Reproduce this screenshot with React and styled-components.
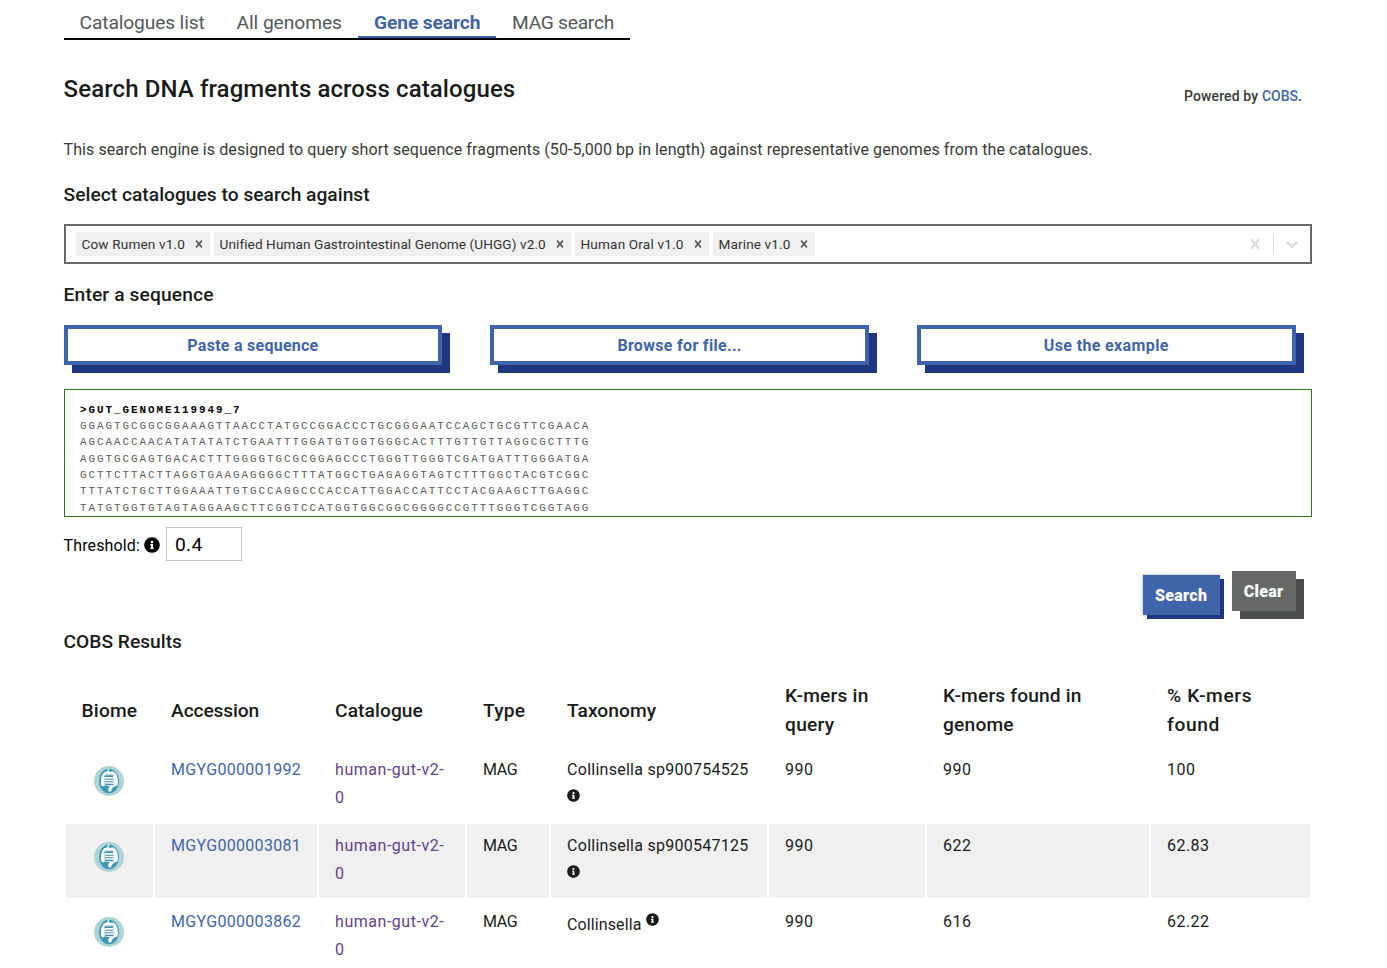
import React from 'react';
import styled, { createGlobalStyle } from 'styled-components';
import { FaInfoCircle } from 'react-icons/fa';

const blue = '#3f64aa';
const navy = '#1f3680';

const GlobalStyle = createGlobalStyle`
  * { box-sizing: border-box; }
  body {
    margin: 0;
    background: #fff;
    color: #1a1c1a;
    font: 400 16px/28px Roboto, "Liberation Sans", sans-serif;
  }
`;

const Page = styled.main`
  height: 968px;
  overflow: hidden;
  padding: 0 75.4px 0 63.6px;
`;

const Fit = styled.span`
  letter-spacing: ${(p) => p.$ls}px;
`;

const Tabs = styled.nav`
  display: flex;
  width: 566px;
  height: 40px;
  border-bottom: 2px solid #000;
`;

const Tab = styled.a`
  width: ${(p) => p.$w}px;
  height: 38px;
  padding: 9px 0 0 16.4px;
  font-size: 19.2px;
  line-height: 27px;
  white-space: nowrap;
  font-weight: ${(p) => (p.$active ? 700 : 400)};
  color: ${(p) => (p.$active ? blue : '#54585a')};
  border-bottom: 2px solid ${(p) => (p.$active ? blue : 'transparent')};

  &:first-child { padding-left: 16px; }
`;

const Header = styled.header`
  display: flex;
  align-items: flex-end;
  justify-content: space-between;
  height: 29px;
  margin-top: 35px;
  padding-right: 9.6px;
`;

const Title = styled.h1`
  margin: 0 0 1px;
  font-size: 24px;
  font-weight: 500;
  line-height: 28px;
  letter-spacing: 0.1px;
`;

const Powered = styled.p`
  margin: 0;
  font-size: 14px;
  font-weight: 500;
  line-height: 16px;
  letter-spacing: 0.13px;
  color: #373a36;
`;

const Link = styled.a`
  color: ${(p) => (p.$visited ? '#62408c' : blue)};
  letter-spacing: ${(p) => p.$ls || 0}px;
`;

const Intro = styled.p`
  margin: 33px 0 0;
  line-height: 25px;
  letter-spacing: 0.076px;
  white-space: nowrap;
  color: #373a36;
`;

const Heading = styled.h2`
  margin: ${(p) => p.$mt}px 0 0;
  font-size: 19.2px;
  font-weight: 500;
  line-height: 29px;
  letter-spacing: ${(p) => p.$ls || 0}px;
`;

const Select = styled.div`
  display: flex;
  align-items: center;
  height: 40px;
  margin-top: 15px;
  padding-left: 10px;
  border: 2px solid #696969;
`;

const Chips = styled.div`
  display: flex;
  flex: 1;
  gap: 4px;
`;

const Chip = styled.div`
  display: flex;
  align-items: center;
  justify-content: space-between;
  width: ${(p) => p.$w}px;
  height: 24px;
  padding: 0 3.6px 0 5.9px;
  background: #f0f0f0;
  color: #333;
  font-size: 13.6px;
  line-height: 24px;
  white-space: nowrap;
`;

const Glyph = styled.svg`
  display: block;
  fill: currentColor;
`;

const ChipGlyph = styled(Glyph)`
  color: #555;
`;

const Indicator = styled.div`
  padding: 0 8px;
  color: #dcdcdc;
`;

const Separator = styled.div`
  width: 1px;
  height: 20px;
  background: #dcdcdc;
`;

const ButtonGrid = styled.div`
  display: grid;
  grid-template-columns: repeat(3, 1fr);
  gap: 48px;
  margin: 16px 16px 0 0;
`;

const Button = styled.button`
  height: 40px;
  padding: 1px 0 0;
  font: 700 16px/31px Roboto, sans-serif;
  color: ${blue};
  background: #fff;
  border: 4px solid ${blue};
  border-radius: 0;
  box-shadow: 8px 8px 0 ${navy};
  letter-spacing: ${(p) => p.$ls}px;
`;

const Sequence = styled.pre`
  height: 128px;
  margin: 24px 0 0;
  padding: 11.8px 15px 0 15.3px;
  overflow: hidden;
  border: 1px solid #2d7a17;
  color: #5c5c5c;
  font: 400 10.88px/16.32px "Courier", "Courier New", "Liberation Mono", monospace;
  letter-spacing: 1.98px;
`;

const SequenceName = styled.b`
  color: #000;
`;

const Threshold = styled.label`
  display: flex;
  align-items: center;
  height: 34px;
  margin-top: 10px;
  color: #000;
`;

const ThresholdIcon = styled(FaInfoCircle)`
  width: 16px;
  height: 16px;
  margin: 2px 6.4px 0 4px;
`;

const ThresholdLabel = styled.span`
  width: 76px;
  padding-top: 3px;
  letter-spacing: 0.12px;
`;

const NumberInput = styled.input`
  width: 76px;
  height: 34px;
  padding: 0 8px;
  border: 1px solid #c6c6c6;
  font: 400 19.2px Roboto, sans-serif;
  letter-spacing: 0.35px;
  color: #000;
`;

const Actions = styled.div`
  display: flex;
  justify-content: flex-end;
  gap: 12px;
  height: 44px;
  margin: 10px 16px 0 0;
`;

const SolidButton = styled(Button)`
  width: ${(p) => p.$w}px;
  margin-top: ${(p) => (p.$pressed ? 4 : 0)}px;
  padding-top: 0;
  border: 0;
  color: #fff;
  font-weight: 900;
  background: ${(p) => (p.$grey ? '#676967' : blue)};
  box-shadow: ${(p) =>
    p.$pressed ? `4px 4px 0 ${navy}, 0 0 4px rgba(0, 0, 0, 0.3)` : '8px 8px 0 #4a4d4f'};
`;

const Table = styled.table`
  width: 1248px;
  margin-top: 16px;
  table-layout: fixed;
  border-collapse: separate;
  border-spacing: 2px;
`;

const Col = styled.col`
  width: ${(p) => p.$w}px;
`;

const Th = styled.th`
  height: 72px;
  padding: 0 16px 0 16.5px;
  text-align: left;
  vertical-align: middle;
  font-size: 19.2px;
  font-weight: 500;
  line-height: 29px;

  &:first-child { padding-left: 16px; }
`;

const Row = styled.tr`
  height: 74px;
  background: ${(p) => (p.$shaded ? '#f0f0f0' : '#fff')};
`;

const Td = styled.td`
  padding: 8px 15px 8px 16.5px;
  vertical-align: top;
  letter-spacing: ${(p) => p.$ls || 0}px;
`;

const BiomeTd = styled(Td)`
  padding: ${(p) => (p.$last ? 17 : 18)}px 0 0 28.4px;
`;

const TaxonomyTd = styled(Td)`
  padding-right: 14px;
  padding-top: ${(p) => (p.$last ? 11 : 8)}px;
  letter-spacing: ${(p) => (p.$last ? 0.1 : 0.26)}px;
`;

const InfoMark = styled(FaInfoCircle)`
  width: 13px;
  height: 13px;
  vertical-align: ${(p) => (p.$raised ? '4.5px' : '1.5px')};
  margin-top: -6px;
`;

const paths = {
  cross:
    'M14.348 14.849c-0.469 0.469-1.229 0.469-1.697 0l-2.651-3.030-2.651 3.029c-0.469 0.469-1.229 0.469-1.697 0-0.469-0.469-0.469-1.229 0-1.697l2.758-3.15-2.759-3.152c-0.469-0.469-0.469-1.228 0-1.697s1.228-0.469 1.697 0l2.652 3.031 2.651-3.031c0.469-0.469 1.228-0.469 1.697 0s0.469 1.229 0 1.697l-2.758 3.152 2.758 3.15c0.469 0.469 0.469 1.229 0 1.698z',
  chevron:
    'M4.516 7.548c0.436-0.446 1.043-0.481 1.576 0l3.908 3.747 3.908-3.747c0.533-0.481 1.141-0.446 1.574 0 0.436 0.445 0.408 1.197 0 1.615-0.406 0.418-4.695 4.502-4.695 4.502-0.217 0.223-0.502 0.335-0.787 0.335s-0.57-0.112-0.789-0.335c0 0-4.287-4.084-4.695-4.502s-0.436-1.17 0-1.615z',
};

const SelectGlyph = ({ name, size, as: Shape = Glyph }) => (
  <Shape width={size} height={size} viewBox="0 0 20 20">
    <path d={paths[name]} />
  </Shape>
);

const GutIcon = () => (
  <Glyph width="30" height="30" viewBox="0 0 30 30">
    <circle cx="15" cy="15" r="15" fill="#afd3d7" />
    <ellipse cx="15" cy="15" rx="10" ry="12.2" fill="#3b97b2" />
    <path
      d="M14.4 2.2 13 5.6 10.2 6.2 8.4 8.4 7 12.5 6.9 18.8 8.4 20.4 10.6 19.7 11 17.8 10.2 16.6 10.2 9.6 12.6 8.6 15 8.8 17.2 8.4 19.8 9.2 20 10.2 20.2 17.6 18.2 19.5 15.6 20.2 14.2 22.5 14.6 25.6 17 25.4 18 22.8 20.4 20.6 23.4 19.6 24 16.2 23.5 11.6 21.8 7.3 19.4 5.4 16.3 5.8 14.6 5.6 15.4 2.4z"
      fill="#fff"
    />
    <path d="M10.4 9.8h9.8v8.6l-2.8 1.4h-5.8l.1-2.4-1.3-.8z" fill="#fff" />
    <path
      d="M10.6 10.5h8.4M11.2 13.2h8.4M10.9 15.8h8.6M11.4 18.4h8"
      stroke="#3b8fac"
      strokeWidth="1.1"
    />
  </Glyph>
);

const chips = [
  ['Cow Rumen v1.0', 134, 0.14],
  ['Unified Human Gastrointestinal Genome (UHGG) v2.0', 357, 0.09],
  ['Human Oral v1.0', 134, 0.16],
  ['Marine v1.0', 102, 0.12],
];

const sequence = [
  'GGAGTGCGGCGGAAAGTTAACCTATGCCGGACCCTGCGGGAATCCAGCTGCGTTCGAACA',
  'AGCAACCAACATATATATCTGAATTTGGATGTGGTGGGCACTTTGTTGTTAGGCGCTTTG',
  'AGGTGCGAGTGACACTTTGGGGTGCGCGGAGCCCTGGGTTGGGTCGATGATTTGGGATGA',
  'GCTTCTTACTTAGGTGAAGAGGGGCTTTATGGCTGAGAGGTAGTCTTTGGCTACGTCGGC',
  'TTTATCTGCTTGGAAATTGTGCCAGGCCCACCATTGGACCATTCCTACGAAGCTTGAGGC',
  'TATGTGGTGTAGTAGGAAGCTTCGGTCCATGGTGGCGGCGGGGCCGTTTGGGTCGGTAGG',
].join('\n');

const columns = [
  ['Biome', 87, 0.14],
  ['Accession', 162, -0.14],
  ['Catalogue', 146, 0.07],
  ['Type', 82, 0.14],
  ['Taxonomy', 216, 0.03],
  ['K-mers in query', 156, 0.2],
  ['K-mers found in genome', 222, 0.15],
  ['% K-mers found', 159, 0.6],
];

const results = [
  ['MGYG000001992', 'Collinsella sp900754525', '990', '100'],
  ['MGYG000003081', 'Collinsella sp900547125', '622', '62.83'],
  ['MGYG000003862', 'Collinsella', '616', '62.22'],
];

export default function App() {
  return (
    <Page>
      <GlobalStyle />
      <Tabs>
        <Tab $w={156.5}><Fit $ls={-0.13}>Catalogues list</Fit></Tab>
        <Tab $w={137.5}><Fit $ls={-0.05}>All genomes</Fit></Tab>
        <Tab $w={138} $active><Fit $ls={-0.1}>Gene search</Fit></Tab>
        <Tab $w={134}><Fit $ls={-0.26}>MAG search</Fit></Tab>
      </Tabs>
      <Header>
        <Title>Search DNA fragments across catalogues</Title>
        <Powered>Powered by <Link>COBS</Link>.</Powered>
      </Header>
      <Intro>
        This search engine is designed to query short sequence fragments (50-5,000 bp in length)
        against representative genomes from the catalogues.
      </Intro>
      <Heading $mt={18} $ls={0.02}>Select catalogues to search against</Heading>
      <Select>
        <Chips>
          {chips.map(([name, width, ls]) => (
            <Chip key={name} $w={width}>
              <Fit $ls={ls}>{name}</Fit>
              <SelectGlyph name="cross" size={14} as={ChipGlyph} />
            </Chip>
          ))}
        </Chips>
        <Indicator><SelectGlyph name="cross" size={20} /></Indicator>
        <Separator />
        <Indicator><SelectGlyph name="chevron" size={20} /></Indicator>
      </Select>
      <Heading $mt={16} $ls={0.14}>Enter a sequence</Heading>
      <ButtonGrid>
        <Button $ls={0.26}>Paste a sequence</Button>
        <Button $ls={0.31}>Browse for file...</Button>
        <Button $ls={0.37}>Use the example</Button>
      </ButtonGrid>
      <Sequence>
        <SequenceName>&gt;GUT_GENOME119949_7</SequenceName>
        {'\n' + sequence}
      </Sequence>
      <Threshold>
        <ThresholdLabel>Threshold:</ThresholdLabel>
        <ThresholdIcon />
        <NumberInput defaultValue="0.4" />
      </Threshold>
      <Actions>
        <SolidButton $w={77} $pressed $ls={0.3}>Search</SolidButton>
        <SolidButton $w={64} $grey $ls={0.3}>Clear</SolidButton>
      </Actions>
      <Heading $mt={12}>COBS Results</Heading>
      <Table>
        <colgroup>
          {columns.map(([name, width]) => <Col key={name} $w={width} />)}
        </colgroup>
        <thead>
          <tr>
            {columns.map(([name, , ls]) => (
              <Th key={name}><Fit $ls={ls}>{name}</Fit></Th>
            ))}
          </tr>
        </thead>
        <tbody>
          {results.map(([accession, taxonomy, found, percent], i) => (
            <Row key={accession} $shaded={i % 2 === 1}>
              <BiomeTd $last={i === 2}><GutIcon /></BiomeTd>
              <Td><Link $ls={0.3}>{accession}</Link></Td>
              <Td><Link $visited $ls={0.52}>human-gut-v2-0</Link></Td>
              <Td $ls={-0.4}>MAG</Td>
              <TaxonomyTd $last={i === 2}>
                {taxonomy} <InfoMark $raised={i === 2} />
              </TaxonomyTd>
              <Td $ls={0.4}>990</Td>
              <Td $ls={0.4}>{found}</Td>
              <Td $ls={0.4}>{percent}</Td>
            </Row>
          ))}
        </tbody>
      </Table>
    </Page>
  );
}
